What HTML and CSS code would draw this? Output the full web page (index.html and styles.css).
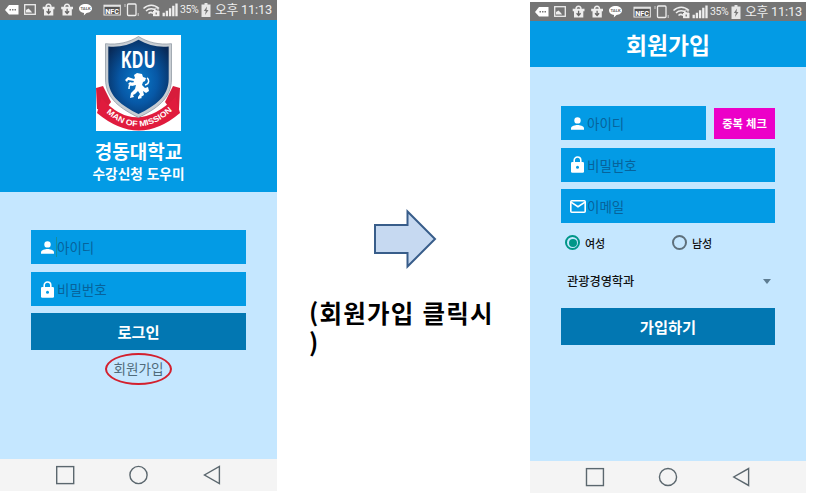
FILE: index.html
```
<!DOCTYPE html>
<html lang="ko">
<head>
<meta charset="utf-8">
<title>수강신청 도우미</title>
<link rel="stylesheet" href="styles.css">
</head>
<body>
<svg width="0" height="0" class="defs" aria-hidden="true">
  <defs>
    <symbol id="status" viewBox="0 0 180 20">
      <path d="M5 10l4-5h9.500v9.500H9z" fill="#fff"/>
      <path d="M9.500 9.700h1.500m1 0h1.500m1 0h1.500" stroke="#777" stroke-width="1.500"/>
      <rect x="24.700" y="4.700" width="10.600" height="9.600" fill="none" stroke="#eee" stroke-width="1.300"/>
      <path d="M26 12.500V10l2.500-1.500 2.500 2.500 1 1.500z" fill="#eee"/>
      <g id="pkg">
        <path d="M42.700 6.800h11.800v2.500H42.700zM44 9.300h9.300v6.200H44z" fill="#eee"/>
        <path d="M46 7.300c0-4 5-4 5 0" fill="none" stroke="#eee" stroke-width="1.400"/>
        <path d="M48.600 8.700v4M46.600 11.200l2 2.300 2-2.300" fill="none" stroke="#666" stroke-width="1.300"/>
      </g>
      <use href="#pkg" x="18.500"/>
      <path d="M85.500 4c3.600 0 6.500 2 6.500 4.500s-2.500 4.300-5.500 4.500l-2.700 2.500.3-2.600c-3-.4-5.100-2-5.100-4.400 0-2.500 2.900-4.500 6.500-4.500z" fill="#fff"/>
      <text x="85.500" y="10" text-anchor="middle" font-size="4.200" font-weight="700" fill="#666">TALK</text>
      <rect x="104" y="5.200" width="16.300" height="9.800" fill="#555" stroke="#eee" stroke-width="1"/>
      <path d="M104 6h16.300" stroke="#eee" stroke-width="1.500"/>
      <text x="112.200" y="13.800" text-anchor="middle" font-size="7.300" font-weight="700" fill="#fff">NFC</text>
      <rect x="127.500" y="4" width="8.500" height="11.500" rx="1" fill="none" stroke="#eee" stroke-width="1.300"/>
      <path d="M125 4v3M138.200 13v3" stroke="#ccc"/>
      <path d="M143.500 8.500c4.500-4.500 11-4.500 15.500 0M146 11c3-3 7.500-3 10.500 0M148.500 13.500c1.500-1.500 3-1.500 4.500 0" fill="none" stroke="#eee" stroke-width="1.500"/>
      <rect x="153" y="11" width="6.500" height="5.200" fill="#eee"/>
      <path d="M154.500 11V9.500c0-2 3.500-2 3.500 0V11" fill="none" stroke="#eee"/>
      <path d="M156.200 12.500v2" stroke="#666" stroke-width="1.200"/>
      <path d="M163.700 16.200v-3.500M166.900 16.200v-5.500M170.100 16.200v-8M173.300 16.200v-10.500M176.500 16.200V3.500" stroke="#eee" stroke-width="2.300"/>
    </symbol>
    <symbol id="battery" viewBox="0 0 10 14">
      <path d="M3.500 0h3v1.500H9.500V14H.500V1.500h3z" fill="#e6e6e6"/>
      <path d="M6 3.500L2.800 8h2L4 12l3.500-5h-2z" fill="#777"/>
    </symbol>
    <symbol id="user" viewBox="0 0 13 13">
      <circle cx="6.500" cy="3.400" r="3.200" fill="#fff"/>
      <path d="M0 12.800v-1.600C0 9 4.300 7.900 6.500 7.900S13 9 13 11.200v1.600z" fill="#fff"/>
    </symbol>
    <symbol id="lock" viewBox="0 0 13 17">
      <path d="M3.200 7V4.300a3.300 3.300 0 0 1 6.600 0V7" fill="none" stroke="#fff" stroke-width="1.600"/>
      <rect y="6" width="13" height="10.800" rx="1.300" fill="#fff"/>
      <circle cx="6.500" cy="11.300" r="1.500" fill="#039be5"/>
    </symbol>
    <symbol id="mail" viewBox="0 0 16 13">
      <rect x=".8" y=".8" width="14.400" height="11.400" rx="1" fill="none" stroke="#fff" stroke-width="1.600"/>
      <path d="M1 2.200l7 4.500 7-4.500" fill="none" stroke="#fff" stroke-width="1.600"/>
    </symbol>
    <symbol id="nav" viewBox="0 0 277 32">
      <g fill="none" stroke="#5b676e" stroke-width="1.400">
        <rect x="56.700" y="7.600" width="17" height="17"/>
        <circle cx="138.500" cy="16" r="8.600"/>
        <path d="M219.400 7.500v17L204.500 16z"/>
      </g>
    </symbol>
  </defs>
</svg>
<main class="board">
  <section class="phone login">
    <div class="status"><svg class="status-icons"><use href="#status"/></svg><span class="percent">35%</span><svg class="battery"><use href="#battery"/></svg><span class="clock">오후 11:13</span></div>
    <header class="brand">
      <svg class="logo" viewBox="0 0 85 96">
        <defs>
          <radialGradient id="blue" cx=".5" cy=".55" r=".62"><stop offset="0" stop-color="#0a7ccb"/><stop offset=".5" stop-color="#0758a6"/><stop offset="1" stop-color="#082a58"/></radialGradient>
          <path id="curve" d="M9.500 77Q42.500 106.500 76.500 75.500"/>
        </defs>
        <path d="M0 0h85v96H0z" fill="#fff"/>
        <path d="M0 53l7-2 8 16-6 8-8-1zM84 53l-7-2-8 16 6 8 8-1z" fill="#d71c3b"/>
        <path d="M3 71l6-3v5zM81 71l-6-3v5z" fill="#8e1128"/>
        <path d="M5.500 63Q40 102 79.500 62L84 78Q43 113 1 78z" fill="#e01b3d"/>
        <path d="M42.500 1.500C33 7.500 22 10 9.500 8.700V44c0 20 16 30 33 38.500C60 74 75.500 64 75.500 44V8.700C63 10 52 7.500 42.500 1.500z" fill="#c7cdd3" stroke="#87919c" stroke-width=".7"/>
        <path d="M42.500 4.800C33 10.500 23 12.500 12.300 11.500V44c0 17.500 14 27 30.200 35C59 71 72.700 61.500 72.700 44V11.500C62 12.500 52 10.500 42.500 4.800z" fill="url(#blue)"/>
        <text x="42.300" y="33" text-anchor="middle" class="logo-name" textLength="35" lengthAdjust="spacingAndGlyphs">KDU</text>
        <path d="M38 40l3-2 5 1 1 3 3 1-1 3-2 1-1 3 3 3 3-1 1 4-3 2-3-2 1 4-3 2 1 1-4 1 0-2 2-3-2-3-3 3-2 1 1 2-4 1 1-5 4-4 1-4-4 1-4-2 2-2 3 1 1-2-6-1-1 2-2-2 3-3 6 2 1-1z" fill="#fff"/>
        <path d="M49 50c5-1 4-6 2-7M37 48c-4 2-4 3-4 6" fill="none" stroke="#fff" stroke-width="1.500"/>
        <text class="ribbon"><textPath href="#curve" startOffset="1" textLength="74" lengthAdjust="spacingAndGlyphs">MAN OF MISSION</textPath></text>
      </svg>
      <h1>경동대학교</h1>
      <p>수강신청 도우미</p>
    </header>
    <form class="form">
      <div class="field focus"><svg class="i-user"><use href="#user"/></svg><span>아이디</span></div>
      <div class="field"><svg class="i-lock"><use href="#lock"/></svg><span>비밀번호</span></div>
      <div class="button">로그인</div>
      <div class="join">회원가입</div>
    </form>
    <svg class="nav"><use href="#nav"/></svg>
  </section>

  <section class="step">
    <svg class="arrow" viewBox="0 0 64 62"><path d="M2 17h32.500V3.500L62 31 34.500 58.500V45H2z" fill="#c6d9f1" stroke="#385d8a" stroke-width="2"/></svg>
    <p>(회원가입 클릭시<br>)</p>
  </section>

  <section class="phone signup">
    <div class="status"><svg class="status-icons"><use href="#status"/></svg><span class="percent">35%</span><svg class="battery"><use href="#battery"/></svg><span class="clock">오후 11:13</span></div>
    <header class="title">회원가입</header>
    <form class="form">
      <div class="row">
        <div class="field"><svg class="i-user"><use href="#user"/></svg><span>아이디</span></div>
        <div class="check">중복 체크</div>
      </div>
      <div class="field"><svg class="i-lock"><use href="#lock"/></svg><span>비밀번호</span></div>
      <div class="field"><svg class="i-mail"><use href="#mail"/></svg><span>이메일</span></div>
      <div class="radios">
        <div class="option"><i class="radio on"></i>여성</div>
        <div class="option"><i class="radio"></i>남성</div>
      </div>
      <div class="select"><span>관광경영학과</span><i class="caret"></i></div>
      <div class="button">가입하기</div>
    </form>
    <svg class="nav"><use href="#nav"/></svg>
  </section>
</main>
</body>
</html>
```
FILE: styles.css
```
* { box-sizing: border-box; }
body {
  margin: 0;
  background: #fff;
  font-family: "Noto Sans CJK KR", sans-serif;
}
h1, p { margin: 0; }
svg { display: block; flex: none; }
.defs { position: absolute; }
.board {
  display: flex;
  width: 819px;
  height: 495px;
  overflow: hidden;
}
.phone {
  display: flex;
  flex-direction: column;
  flex: none;
  width: 277px;
  height: 491px;
  background: #c5e7ff;
}
.signup { width: 276px; margin-top: 2px; }

.status {
  display: flex;
  align-items: center;
  flex: none;
  height: 20px;
  background: #757575;
  color: #eee;
  white-space: nowrap;
  overflow: hidden;
}
.signup .status { height: 19px; }
.status-icons { width: 180px; height: 20px; font-family: Roboto, sans-serif; }
.percent { width: 21px; font: 10.5px/20px Roboto, sans-serif; letter-spacing: -0.4px; }
.battery { width: 10px; height: 14px; }
.clock {
  margin-left: 4px;
  font: 12.8px/20px Roboto, "Noto Sans CJK KR", sans-serif;
  letter-spacing: -0.2px;
}

.brand {
  flex: none;
  height: 172px;
  padding-top: 15px;
  background: #039be5;
  color: #fff;
  text-align: center;
}
.logo { width: 85px; height: 96px; margin: 0 auto; }
.logo-name { font: 700 24px "Open Sans", sans-serif; fill: #fff; }
.ribbon { font: 700 8px "Liberation Sans", sans-serif; fill: #fff; }
.brand h1 { margin-top: 8px; font-size: 19px; line-height: 24px; font-weight: 700; }
.brand p { font-size: 13.7px; line-height: 20px; font-weight: 700; }

.form {
  flex: 1;
  display: flex;
  flex-direction: column;
  gap: 8px;
  padding: 38px 31px 0;
}
.field {
  display: flex;
  align-items: center;
  flex: none;
  height: 34px;
  padding-left: 10px;
  background: #039be5;
  color: #07639b;
  font-size: 13.5px;
  line-height: 20px;
}
.i-user { width: 13px; height: 13px; margin-right: 3px; }
.i-lock { width: 13px; height: 17px; margin-right: 3px; }
.i-mail { width: 16px; height: 13px; margin: 0 1px 0 -1px; }
.focus span { box-shadow: -1px 0 #168e9d; }
.button {
  flex: none;
  height: 37px;
  background: #0277b2;
  color: #fff;
  font-size: 15.3px;
  line-height: 36px;
  font-weight: 700;
  text-align: center;
}
.login .button { margin-top: -1px; }
.join {
  width: 67px;
  height: 32px;
  margin: -5px auto 0;
  border: 2px solid #d3202e;
  border-radius: 50%;
  color: #506b7a;
  font-size: 13.6px;
  line-height: 26px;
  text-align: center;
}
.nav { width: 100%; height: 32px; background: #f4f4f4; }

.step { width: 253px; padding: 208px 0 0 32px; }
.arrow { width: 64px; height: 62px; margin-left: 64px; }
.step p {
  margin-top: 28px;
  color: #000;
  font-size: 24.5px;
  line-height: 30px;
  font-weight: 700;
  letter-spacing: 1.2px;
  white-space: nowrap;
}

.title {
  flex: none;
  height: 46px;
  background: #039be5;
  color: #fff;
  font-size: 22.8px;
  line-height: 48px;
  font-weight: 700;
  text-align: center;
}
.signup .form { padding-top: 39px; }
.signup .form { gap: 7.5px; }
.row { display: flex; align-items: center; gap: 8px; flex: none; height: 34px; }
.row .field { width: 145px; }
.check {
  flex: 1;
  height: 31px;
  background: #ec00c8;
  color: #fff;
  font-size: 11.3px;
  line-height: 31px;
  font-weight: 700;
  text-align: center;
}
.radios { display: grid; grid-template-columns: 107px 1fr; flex: none; padding-left: 4px; height: 24px; }
.option {
  display: flex;
  align-items: center;
  gap: 5px;
  font-size: 11px;
  line-height: 20px;
  font-weight: 500;
  color: #111;
}
.radio {
  display: grid;
  place-items: center;
  width: 15px;
  height: 15px;
  border: 2px solid #5e707c;
  border-radius: 50%;
}
.radio.on { border-color: #009688; }
.radio.on::after {
  content: "";
  width: 8px;
  height: 8px;
  border-radius: 50%;
  background: #009688;
}
.select {
  display: flex;
  align-items: center;
  justify-content: space-between;
  flex: none;
  height: 38px;
  padding: 0 4px 0 6px;
  color: #111;
  font-size: 12.2px;
  font-weight: 500;
}
.caret {
  border: 4px solid transparent;
  border-top: 5px solid #5e7d92;
  border-bottom: 0;
}
```
